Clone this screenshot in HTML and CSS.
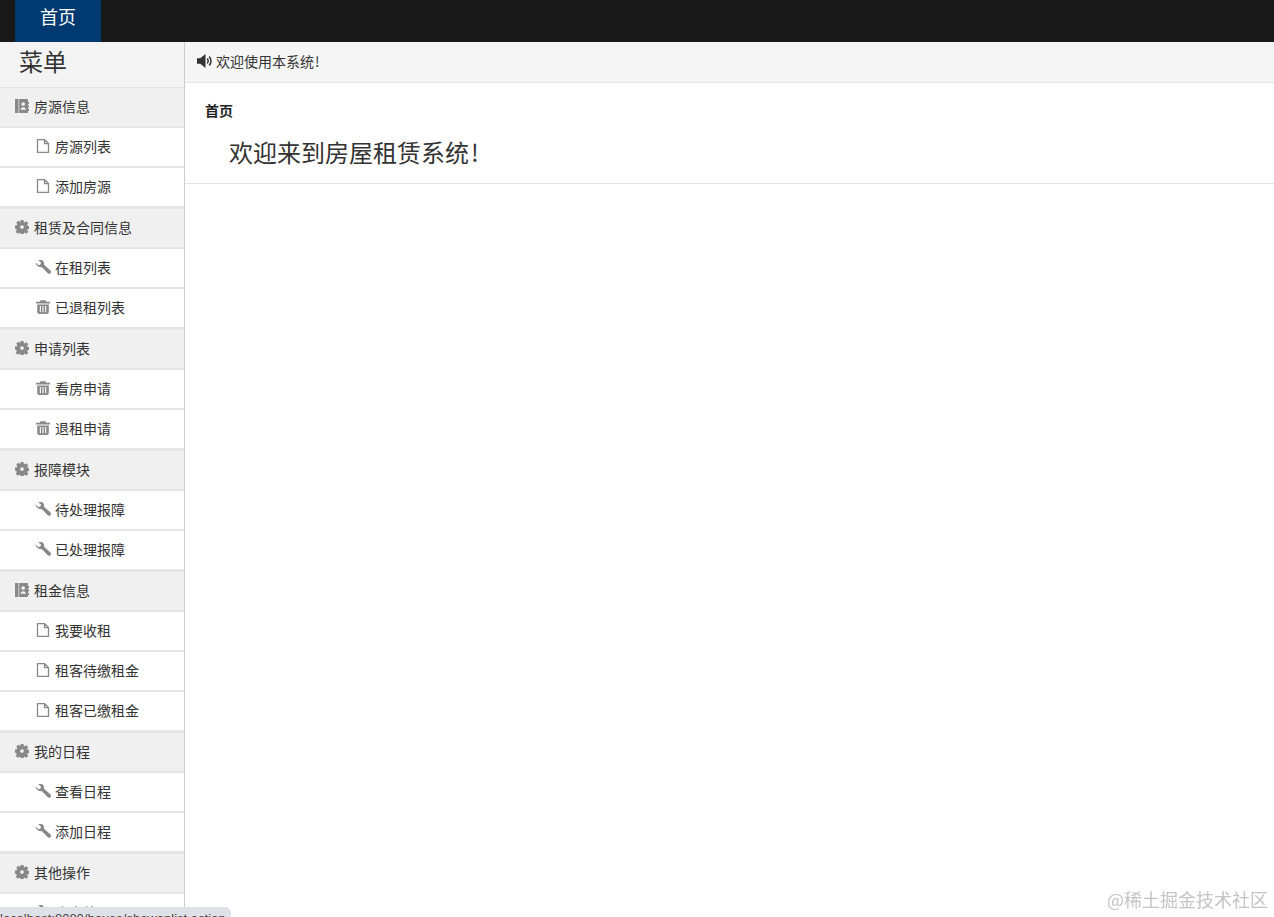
FILE: index.html
```html
<!DOCTYPE html>
<html lang="zh-CN">
<head>
<meta charset="utf-8">
<title>房屋租赁系统</title>
<link rel="stylesheet" href="styles.css">
</head>
<body>
<svg class="sprite" aria-hidden="true">
  <symbol id="i-contact" viewBox="0 0 14 14">
    <path fill-rule="evenodd" d="M0 0h3.500v14H0zM4.200 0H12a1 1 0 0 1 1 1v2h1v2h-1v1.500h1v2h-1V10h1v2h-1v1a1 1 0 0 1-1 1H4.200zM8.200 3.200a1.800 1.800 0 1 0 .01 0zM5.600 10.800h5.200c0-1.600-1-2.600-2.600-2.600s-2.600 1-2.600 2.600z"/>
  </symbol>
  <symbol id="i-file" viewBox="0 0 14 14">
    <path fill="none" stroke="currentColor" stroke-width="1.300" d="M1.500.6h7l4 4v8.800h-11zM8.500.6v4h4"/>
  </symbol>
  <symbol id="i-cog" viewBox="0 0 14 14">
    <path fill-rule="evenodd" d="M5.500 0h3l.3 1.900.9.4 1.600-1.100 2 2-1.100 1.600.4.900 1.900.3v3l-1.900.3-.4.9 1.100 1.600-2 2-1.600-1.100-.9.4-.3 1.900h-3l-.3-1.900-.9-.4-1.600 1.100-2-2 1.100-1.600-.4-.9L0 8.500v-3l1.900-.3.4-.9-1.100-1.600 2-2 1.600 1.100.9-.4zM7 5.200a1.800 1.800 0 1 0 .01 0z"/>
  </symbol>
  <symbol id="i-wrench" viewBox="0 0 16 14">
    <path d="M.7 2.600 3.500 5.200l1.900-.6.600-2L3.200.3C4.900-.4 7-.2 8.100 1c1 1.100 1.300 2.500.9 3.700l6.300 5.600c.9.900.9 2.100.2 2.900-.8.800-2 .8-2.900-.1L6.600 7C5.200 7.400 3.600 7 2.500 6 1.400 5 .5 3.800.7 2.600z"/>
  </symbol>
  <symbol id="i-trash" viewBox="0 0 14 14">
    <path fill-rule="evenodd" d="M0 1.800h3.600L4.500.2h5l.9 1.600H14v1.800H0zM1.200 4.600h11.600V12a2 2 0 0 1-2 2H3.200a2 2 0 0 1-2-2zM3.800 6v6.200h1.100V6zM6.450 6v6.200h1.100V6zM9.100 6v6.200h1.100V6z"/>
  </symbol>
  <symbol id="i-volume" viewBox="0 0 16 14">
    <path d="M0 4.300h3.200L8.500 0v14L3.200 9.700H0z"/>
    <path fill="none" stroke="currentColor" stroke-width="1.500" d="M10.200 4.600c1.300 1.300 1.300 3.500 0 4.800M12.200 2.600c2.400 2.400 2.400 6.400 0 8.800"/>
  </symbol>
</svg>

<nav class="topbar">
  <a class="tab" href="#">首页</a>
</nav>

<div class="shell">
  <aside class="sidebar">
    <h2 class="menu-title">菜单</h2>

    <ul class="group">
      <li class="group-head"><svg class="ico"><use href="#i-contact"/></svg><span class="label">房源信息</span></li>
      <li class="item"><svg class="ico"><use href="#i-file"/></svg><span class="label">房源列表</span></li>
      <li class="item"><svg class="ico"><use href="#i-file"/></svg><span class="label">添加房源</span></li>
    </ul>
    <ul class="group">
      <li class="group-head"><svg class="ico"><use href="#i-cog"/></svg><span class="label">租赁及合同信息</span></li>
      <li class="item"><svg class="ico wide"><use href="#i-wrench"/></svg><span class="label">在租列表</span></li>
      <li class="item"><svg class="ico"><use href="#i-trash"/></svg><span class="label">已退租列表</span></li>
    </ul>
    <ul class="group">
      <li class="group-head"><svg class="ico"><use href="#i-cog"/></svg><span class="label">申请列表</span></li>
      <li class="item"><svg class="ico"><use href="#i-trash"/></svg><span class="label">看房申请</span></li>
      <li class="item"><svg class="ico"><use href="#i-trash"/></svg><span class="label">退租申请</span></li>
    </ul>
    <ul class="group">
      <li class="group-head"><svg class="ico"><use href="#i-cog"/></svg><span class="label">报障模块</span></li>
      <li class="item"><svg class="ico wide"><use href="#i-wrench"/></svg><span class="label">待处理报障</span></li>
      <li class="item"><svg class="ico wide"><use href="#i-wrench"/></svg><span class="label">已处理报障</span></li>
    </ul>
    <ul class="group">
      <li class="group-head"><svg class="ico"><use href="#i-contact"/></svg><span class="label">租金信息</span></li>
      <li class="item"><svg class="ico"><use href="#i-file"/></svg><span class="label">我要收租</span></li>
      <li class="item"><svg class="ico"><use href="#i-file"/></svg><span class="label">租客待缴租金</span></li>
      <li class="item"><svg class="ico"><use href="#i-file"/></svg><span class="label">租客已缴租金</span></li>
    </ul>
    <ul class="group">
      <li class="group-head"><svg class="ico"><use href="#i-cog"/></svg><span class="label">我的日程</span></li>
      <li class="item"><svg class="ico wide"><use href="#i-wrench"/></svg><span class="label">查看日程</span></li>
      <li class="item"><svg class="ico wide"><use href="#i-wrench"/></svg><span class="label">添加日程</span></li>
    </ul>
    <ul class="group">
      <li class="group-head"><svg class="ico"><use href="#i-cog"/></svg><span class="label">其他操作</span></li>
      <li class="item"><svg class="ico wide"><use href="#i-wrench"/></svg><span class="label">个人处理</span></li>
    </ul>
  </aside>

  <main class="content">
    <div class="notice"><svg class="notice-ico"><use href="#i-volume"/></svg><span class="label">欢迎使用本系统<span class="bang-small">!</span></span></div>
    <div class="crumb">首页</div>
    <h1 class="welcome">欢迎来到房屋租赁系统<span class="bang">!</span></h1>
  </main>
</div>

<div class="status-tip">localhost:8080/house/showaplist.action</div>
<div class="watermark">@稀土掘金技术社区</div>
</body>
</html>
```

FILE: styles.css
```css
* {
  box-sizing: border-box;
}

html,
body {
  margin: 0;
  height: 917px;
  overflow: hidden;
}

body {
  font-family: "Noto Sans CJK SC", "Liberation Sans", sans-serif;
  font-size: 14px;
  color: #333;
  background: #fff;
}

.sprite {
  display: none;
}

.topbar {
  height: 42px;
  padding-left: 15px;
  background: #191919;
  display: flex;
}

.tab {
  width: 86px;
  padding-bottom: 11px;
  display: flex;
  align-items: center;
  justify-content: center;
  background: #003a70;
  color: #fff;
  font-size: 18px;
  text-decoration: none;
}

.shell {
  display: flex;
  height: 875px;
}

.sidebar {
  width: 185px;
  flex: none;
  overflow: hidden;
  border-right: 1px solid #ccc;
  background: #f3f3f3;
}

.menu-title {
  margin: 0;
  height: 46px;
  padding-left: 19px;
  border-bottom: 1px solid #e5e5e5;
  font-size: 24px;
  font-weight: 400;
  line-height: 38px;
}

.group {
  list-style: none;
  margin: 0;
  padding: 0;
  border-bottom: 1px solid #e5e5e5;
}

.group-head,
.item {
  display: flex;
  align-items: center;
  height: 40px;
  border-bottom: 2px solid #e5e5e5;
}

.group-head {
  padding-left: 15px;
  background: #f0f0f0;
}

.item {
  padding-left: 36px;
  background: #fff;
}

.label {
  margin-top: -2px;
}

.ico {
  width: 14px;
  height: 14px;
  margin-right: 5px;
  margin-top: -3px;
  flex: none;
  color: #888;
  fill: currentColor;
}

.ico.wide {
  width: 16px;
  margin-left: -1px;
  margin-right: 4px;
}

.content {
  flex: 1;
  min-width: 0;
}

.notice {
  display: flex;
  align-items: center;
  height: 41px;
  padding-left: 12px;
  background: #f5f5f5;
  border-bottom: 1px solid #e5e5e5;
}

.notice-ico {
  width: 16px;
  height: 14px;
  margin-right: 3px;
  margin-top: -2px;
  color: #333;
  fill: currentColor;
}

.bang-small {
  margin-left: 1px;
}

.crumb {
  padding: 17px 0 0 20px;
  font-weight: 700;
  line-height: 20px;
  color: #222;
}

.welcome {
  margin: 0;
  height: 64px;
  padding: 15px 0 0 44px;
  border-bottom: 1px solid #e5e5e5;
  font-size: 24px;
  font-weight: 400;
  line-height: 34px;
}

.bang {
  margin-left: 2px;
}

.status-tip {
  position: fixed;
  left: 0;
  bottom: 0;
  width: 231px;
  height: 10px;
  overflow: hidden;
  padding-top: 5px;
  background: #dee1e6;
  border-top-right-radius: 6px;
  font-family: "Liberation Sans", sans-serif;
  font-size: 13px;
  line-height: 13px;
  white-space: nowrap;
  color: #444;
}

.watermark {
  position: fixed;
  right: 6px;
  bottom: 6px;
  font-size: 18px;
  line-height: 24px;
  color: #c4c4c4;
}
```
